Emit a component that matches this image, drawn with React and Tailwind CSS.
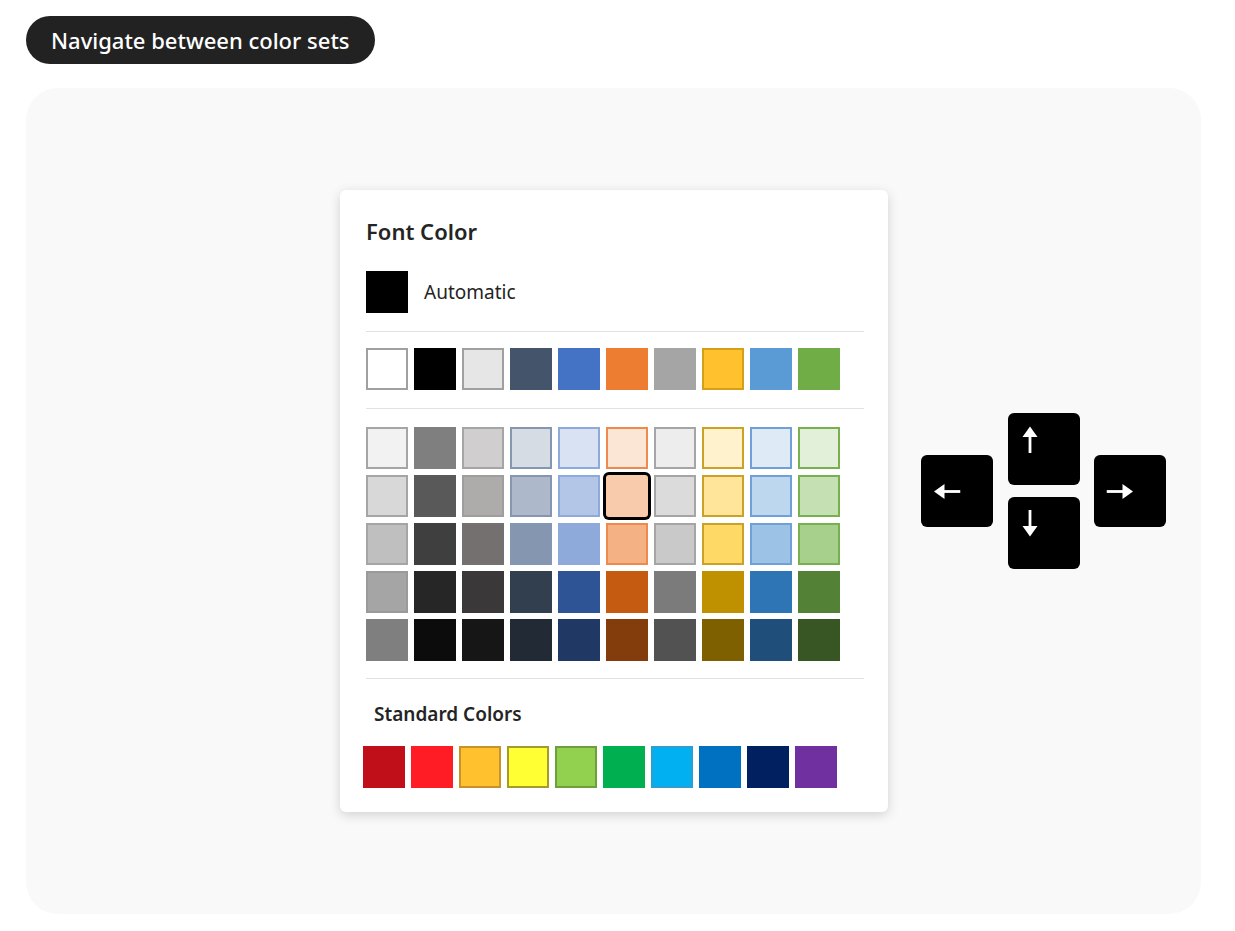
import React from 'react';

const FONT = { fontFamily: '"Noto Sans", "Open Sans", Arial, sans-serif' };

// [fill, border]
const THEME = [
  ['#ffffff', '#a0a0a0'], ['#000000', '#000000'], ['#e7e6e6', '#a0a0a0'], ['#44546a', '#44546a'],
  ['#4472c4', '#4472c4'], ['#ed7d31', '#ed7d31'], ['#a5a5a5', '#a5a5a5'], ['#ffc12d', '#d4a017'],
  ['#5b9bd5', '#5b9bd5'], ['#70ad47', '#70ad47'],
];

const SHADES = [
  [['#f2f2f2', '#a5a5a5'], ['#7f7f7f', '#7f7f7f'], ['#d0cece', '#a5a5a5'], ['#d6dce4', '#8496b0'], ['#d9e2f3', '#8eaadb'],
   ['#fbe5d5', '#ee8a4e'], ['#ededed', '#a5a5a5'], ['#fff2cc', '#c9a227'], ['#deebf6', '#6fa0d8'], ['#e2efd9', '#78b050']],
  [['#d8d8d8', '#a5a5a5'], ['#595959', '#595959'], ['#aeabab', '#a09d9d'], ['#adb9ca', '#8496b0'], ['#b4c6e7', '#8eaadb'],
   ['#f7cbac', '#f7cbac'], ['#dbdbdb', '#a5a5a5'], ['#fee599', '#c9a227'], ['#bdd7ee', '#6fa0d8'], ['#c5e0b3', '#78b050']],
  [['#bfbfbf', '#a5a5a5'], ['#3f3f3f', '#3f3f3f'], ['#757070', '#757070'], ['#8496b0', '#8496b0'], ['#8eaadb', '#8eaadb'],
   ['#f4b183', '#ee8a4e'], ['#c9c9c9', '#a5a5a5'], ['#ffd965', '#c9a227'], ['#9cc3e5', '#6fa0d8'], ['#a8d08d', '#78b050']],
  [['#a5a5a5', '#9a9a9a'], ['#262626', '#262626'], ['#3a3838', '#3a3838'], ['#323f4f', '#323f4f'], ['#2f5496', '#2f5496'],
   ['#c55a11', '#c55a11'], ['#7b7b7b', '#7b7b7b'], ['#bf9000', '#bf9000'], ['#2e75b5', '#2e75b5'], ['#538135', '#538135']],
  [['#7f7f7f', '#7f7f7f'], ['#0c0c0c', '#0c0c0c'], ['#171616', '#171616'], ['#222a35', '#222a35'], ['#1f3864', '#1f3864'],
   ['#833c0b', '#833c0b'], ['#525252', '#525252'], ['#7f6000', '#7f6000'], ['#1e4e79', '#1e4e79'], ['#375623', '#375623']],
];

const STANDARD = [
  ['#c00f18', '#c00f18'], ['#ff1c24', '#ff1c24'], ['#ffc12d', '#c8922a'], ['#ffff33', '#a39c2a'], ['#92d050', '#6f9f3c'],
  ['#00b050', '#00b050'], ['#00b0f0', '#2a9fd0'], ['#0070c0', '#0070c0'], ['#002060', '#002060'], ['#7030a0', '#7030a0'],
];

const Swatch = ({ fill, border, selected }) => (
  <div
    className={`w-[42px] h-[42px] border-2 ${selected ? 'ring-[3px] ring-black rounded-[3px]' : ''}`}
    style={{ background: fill, borderColor: border }}
  />
);

const Divider = () => <div className="h-px bg-[#e1e1e1]" />;

const Arrow = ({ dir }) => {
  const rot = { up: 0, right: 90, down: 180, left: 270 }[dir];
  return (
    <svg width="16" height="27" viewBox="0 0 16 27" style={{ transform: `rotate(${rot}deg)` }}>
      <rect x="6.6" y="9" width="2.8" height="18" fill="white" />
      <polygon points="0.5,11 8,0.5 15.5,11" fill="white" />
    </svg>
  );
};

const Key = ({ dir }) => {
  const vertical = dir === 'up' || dir === 'down';
  return (
    <div className={`w-[72px] h-[72px] bg-black rounded-[6px] flex ${vertical ? 'items-start pt-[13px] pl-[14px]' : 'items-center pl-[18px]'}`}>
      <div className={vertical ? '' : 'w-[16px] h-[27px] flex items-center justify-center'}>
        <Arrow dir={dir} />
      </div>
    </div>
  );
};

export default function App() {
  return (
    <div className="w-[1235px] min-h-[931px] bg-white pt-4 pl-[26px] pb-[17px]" style={FONT}>
      <div className="inline-flex items-center h-12 px-[25px] rounded-full bg-[#222222] text-white text-[22px] font-medium">
        Navigate between color sets
      </div>

      <div className="mt-6 w-[1175px] h-[826px] rounded-[32px] bg-[#f9f9f9] flex items-center pl-[314px]">
        {/* Font color dropdown */}
        <div className="w-[548px] bg-white rounded-[6px] shadow-[0_3px_12px_rgba(0,0,0,0.16)] pt-[26px] pl-[26px] pr-[24px] pb-[24px] text-[#242424]">
          <div className="text-[22px] font-semibold leading-[30px]">Font Color</div>

          <div className="flex items-center gap-4 mt-[25px]">
            <div className="w-[42px] h-[42px] bg-black" />
            <span className="text-[19px]">Automatic</span>
          </div>

          <div className="mt-[18px]"><Divider /></div>

          <div className="grid grid-cols-10 gap-[6px] w-[474px] mt-4">
            {THEME.map(([f, b], i) => <Swatch key={i} fill={f} border={b} />)}
          </div>

          <div className="mt-[18px]"><Divider /></div>

          <div className="grid grid-cols-10 gap-[6px] w-[474px] mt-[18px]">
            {SHADES.map((row, r) =>
              row.map(([f, b], c) => (
                <Swatch key={`${r}-${c}`} fill={f} border={b} selected={r === 1 && c === 5} />
              ))
            )}
          </div>

          <div className="mt-[17px]"><Divider /></div>

          <div className="mt-[21px] ml-2 text-[19px] font-semibold leading-[28px]">Standard Colors</div>

          <div className="grid grid-cols-10 gap-[6px] w-[474px] mt-[18px] -ml-[3px]">
            {STANDARD.map(([f, b], i) => <Swatch key={i} fill={f} border={b} />)}
          </div>
        </div>

        {/* Arrow keys */}
        <div className="ml-[33px] mb-[20px] flex items-center">
          <Key dir="left" />
          <div className="flex flex-col gap-3 ml-[15px]">
            <Key dir="up" />
            <Key dir="down" />
          </div>
          <div className="ml-[14px]"><Key dir="right" /></div>
        </div>
      </div>
    </div>
  );
}
